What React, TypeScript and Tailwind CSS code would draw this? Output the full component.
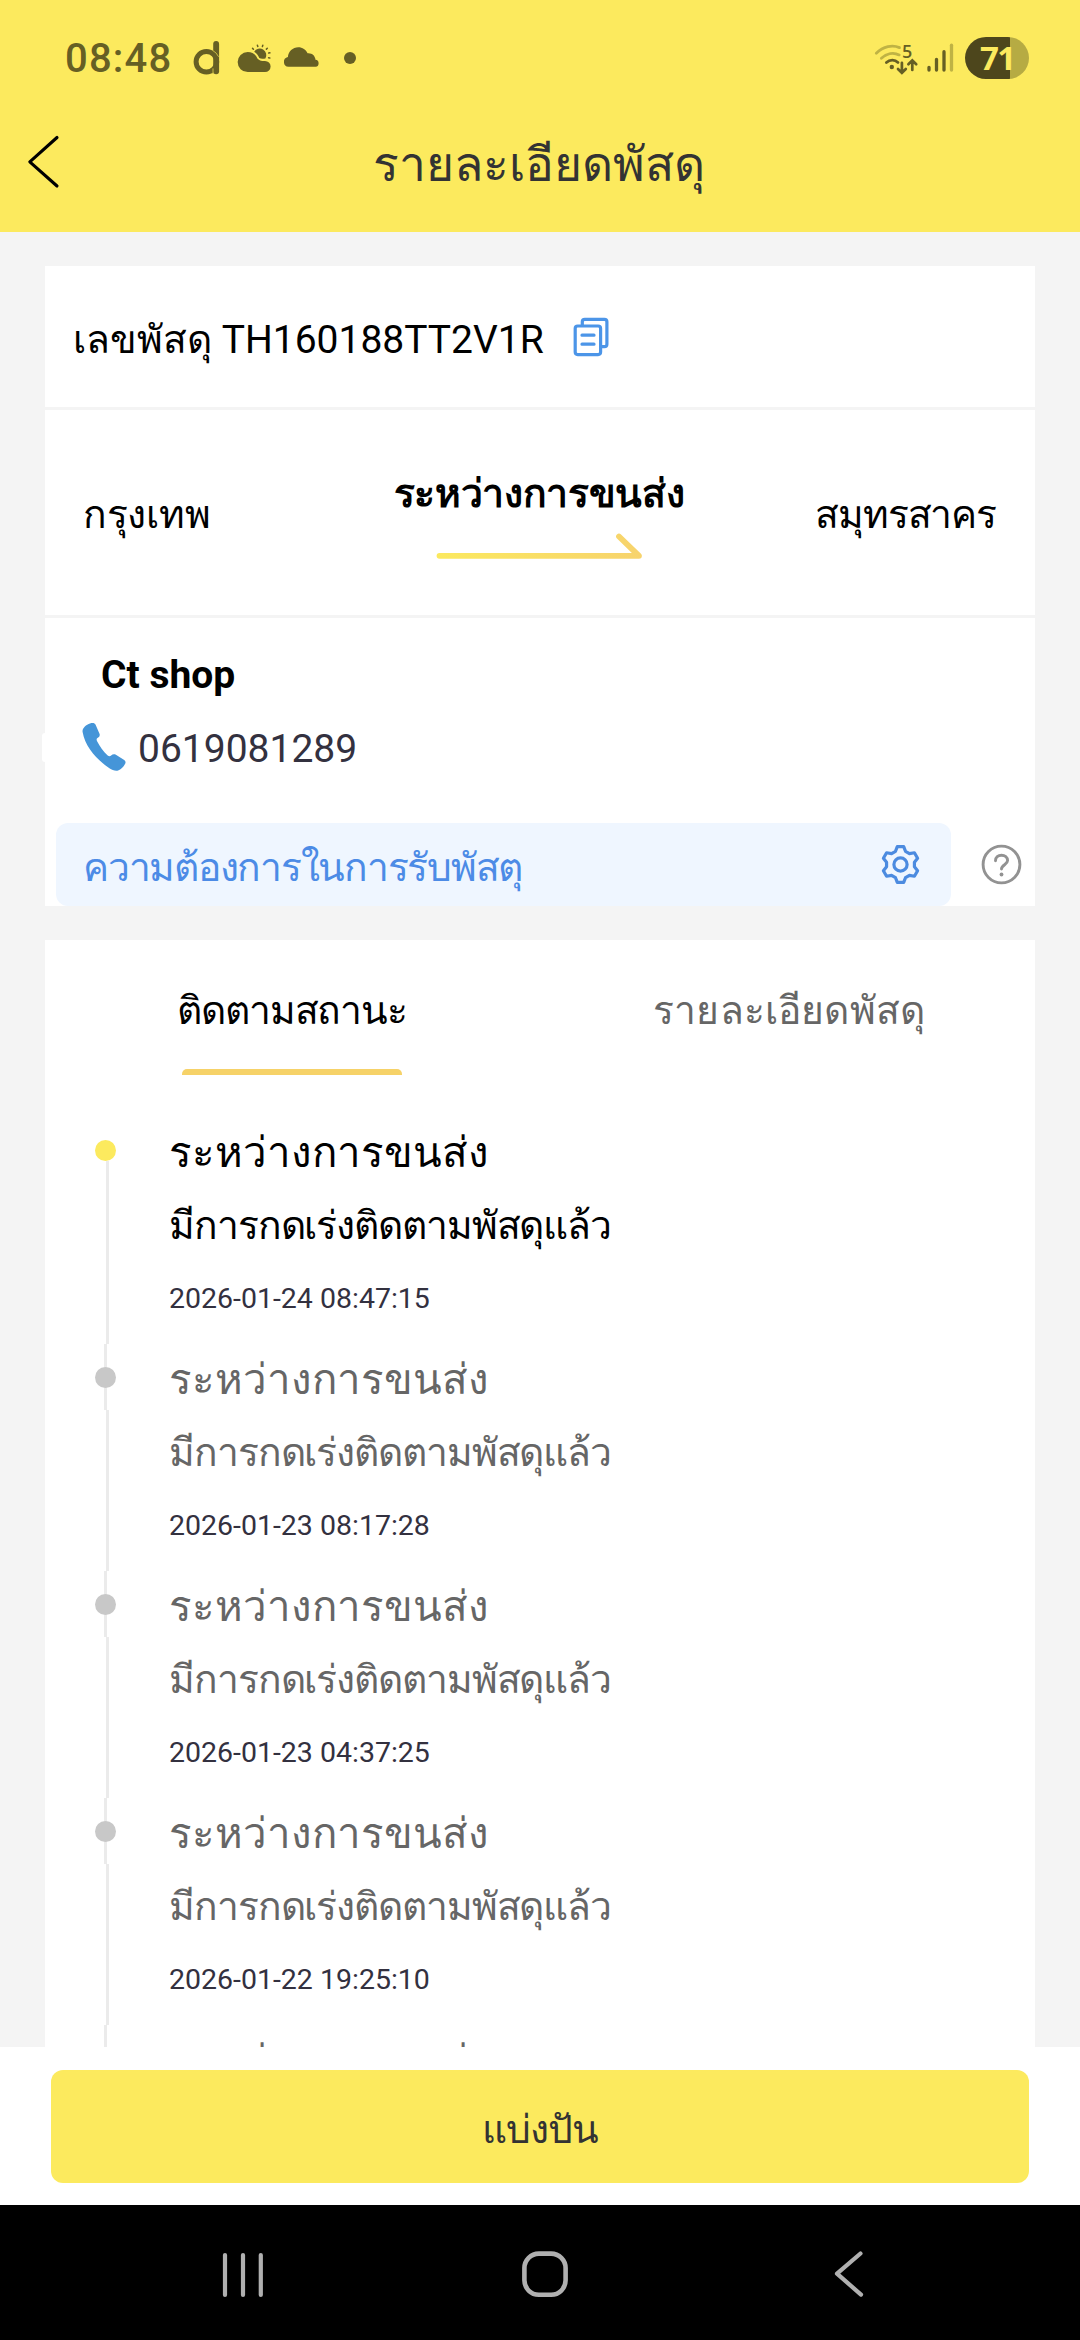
const DARK = "#665f24";
const PALE = "#bfb344";

function StatusBar() {
  return (
    <div className="flex h-[116px] items-center pl-[65px] pr-[51px]">
      <div className="mt-[2px] w-[127px] text-[40px] leading-[40px] font-medium tracking-[1.2px] text-[#665f24]">08:48</div>
      <svg className="mr-[14px]" width="30" height="40" viewBox="192 38 30 40">
        <rect x="213.2" y="41" width="5.9" height="33.2" rx="2.9" fill={DARK} />
        <circle cx="206.4" cy="61.7" r="10.3" fill="none" stroke={DARK} strokeWidth="5" />
        <path d="M212.6 50.4a13.4 13.4 0 0 1 6 6.4M213 68.4v5.6" fill="none" stroke="#c9bc46" strokeWidth="1" />
      </svg>
      <svg className="mr-[8px]" width="38" height="40" viewBox="236 38 38 40">
        <path
          d="M247.7 52c4.700 0 8.300 2.800 9.700 6.600 1.600 1.800 3 2.300 5 2.300h2.600a5.600 5.600 0 0 1 0 11.200h-17.300a10 10 0 0 1 0-20.100z"
          fill={DARK}
        />
        <path d="M254.200 51.800a6.500 6.500 0 1 1 11.200 6.600c-2 .4-4.600.5-6.100-.3-.9-2.700-2.700-4.800-5.100-6.300z" fill={DARK} />
        <g stroke={DARK} strokeWidth="1.500" strokeLinecap="round">
          <path d="M252.600 48.400l.8.800M257.400 45.200l.4 1.200M262.800 45.300l-.4 1.200M267.300 48.200l-.9.900M269.900 52.800l-1.200.3M269.800 58l-1.200-.3" />
        </g>
      </svg>
      <svg className="mr-[22px]" width="40" height="40" viewBox="282 38 40 40">
        <path
          d="M288.500 66.800a4.900 4.900 0 0 1-.6-9.700c.3-5.600 4.900-9.800 10.400-9.800 4.200 0 7.600 2.400 9.300 6 4.300-.5 7.500 2.400 7.900 6.400a3.600 3.600 0 0 1 .2 7.100z"
          fill={DARK}
        />
      </svg>
      <div className="size-[12px] rounded-full bg-[#665f24]" />
      <div className="ml-auto flex items-center">
        <div className="relative mr-[6px] h-[40px] w-[46px]">
          <svg width="46" height="40" viewBox="873 38 46 40" fill="none" strokeLinecap="round">
            <path d="M876.300 53.200c7-7 16.200-8.700 23.200-5.600" stroke={PALE} strokeWidth="2.800" />
            <path d="M881.400 58.200c5.400-5 12.300-6 17.800-3.300" stroke={PALE} strokeWidth="2.800" />
            <path d="M886.400 62.600c3.400-3.300 8.400-3.300 11.600-.2" stroke={DARK} strokeWidth="2.800" />
            <circle cx="891.800" cy="67" r="2.200" fill={DARK} />
            <path d="M901.900 62.800v9.800M898 69l3.900 3.900 3.900-3.900M912.300 70v-9.600M908.400 64.200l3.900-3.900 3.900 3.900" stroke={DARK} strokeWidth="2.700" />
          </svg>
          <span className="absolute left-[29px] top-[4px] font-['Open_Sans'] text-[18px] leading-[18px] font-semibold text-[#665f24]">5</span>
        </div>
        <svg className="mr-[10px]" width="30" height="40" viewBox="925 38 30 40" strokeWidth="3.300" strokeLinecap="round">
          <path d="M929 67.300V70M936.500 59.300V70M944 51.700V70" stroke={DARK} />
          <path d="M951.500 45.200V70" stroke={PALE} />
        </svg>
        <div className="flex h-[42px] w-[64px] items-center rounded-full bg-[linear-gradient(90deg,#4d461c_0_45px,#b6ab43_45px)]">
          <span className="pl-[15px] font-['Open_Sans'] text-[33px] leading-[42px] font-bold tracking-[-1.500px] text-[#fcea5e]">71</span>
        </div>
      </div>
    </div>
  );
}

function TitleBar() {
  return (
    <div className="flex h-[116px] items-start justify-between px-[24px]">
      <svg className="mt-[16px]" width="40" height="60" viewBox="24 132 40 60" fill="none">
        <path d="M57 137.500 29.800 161.800 57 186" stroke="#000" strokeWidth="3.100" strokeLinecap="round" strokeLinejoin="round" />
      </svg>
      <h1 className="mt-[19px] text-[48px] leading-[60px] whitespace-nowrap text-[#333]">รายละเอียดพัสดุ</h1>
      <div className="w-[42px]" />
    </div>
  );
}

function CopyIcon() {
  return (
    <svg className="-mt-[1px]" width="42" height="44" viewBox="570 314 42 44" fill="none" stroke="#4c95e8" strokeWidth="3.200" strokeLinecap="round" strokeLinejoin="round">
      <rect x="574.200" y="326" width="25.400" height="28.600" rx="2.500" />
      <path d="M581.300 325.500v-3.700a2.500 2.500 0 0 1 2.500-2.500h19.600a2.500 2.500 0 0 1 2.500 2.500v22.400a2.500 2.500 0 0 1-2.500 2.500h-3.300M581 335.200h12M581 344.200h12" />
    </svg>
  );
}

const GEAR = Array.from({ length: 6 }, (_, k) => {
  const a = (k * Math.PI) / 3;
  return [
    [-5, -13.2],
    [-3.2, -17.9],
    [3.2, -17.9],
    [5, -13.2],
  ]
    .map(([x, y]) => `${(x * Math.cos(a) - y * Math.sin(a)).toFixed(2)},${(x * Math.sin(a) + y * Math.cos(a)).toFixed(2)}`)
    .join(" ");
}).join(" ");

function ParcelCard() {
  return (
    <section className="bg-white text-black">
      <div className="flex h-[141px] items-start border-b-[3px] border-[#f4f4f4] box-content pl-[28px]">
        <p className="mt-[49px] w-[498px] text-[39px] leading-[50px] whitespace-nowrap">เลขพัสดุ TH160188TT2V1R</p>
        <div className="mt-[49px]">
          <CopyIcon />
        </div>
      </div>
      <div className="flex h-[205px] box-content items-start justify-between border-b-[3px] border-[#f4f4f4] pl-[38px] pr-[40px]">
        <p className="mt-[80px] w-[180px] text-[39px] leading-[50px] tracking-[-0.300px] whitespace-nowrap">กรุงเทพ</p>
        <div className="mt-[59px] flex flex-col items-center">
          <p className="text-[39px] leading-[50px] font-bold tracking-[-0.350px] whitespace-nowrap">ระหว่างการขนส่ง</p>
          <svg className="ml-[2px] mt-[12px]" width="210" height="32" viewBox="436 531 210 32" fill="none">
            <defs>
              <linearGradient id="route" gradientUnits="userSpaceOnUse" x1="438" y1="0" x2="643" y2="0">
                <stop offset="0" stopColor="#fbe95f" />
                <stop offset="1" stopColor="#f7d36d" />
              </linearGradient>
            </defs>
            <path d="M440.500 555.800H640L620 536.500" stroke="url(#route)" strokeWidth="5.800" strokeLinecap="round" strokeLinejoin="round" />
          </svg>
        </div>
        <p className="mt-[80px] w-[180px] text-right text-[39px] leading-[50px] tracking-[-1.100px] whitespace-nowrap">สมุทรสาคร</p>
      </div>
      <div className="relative flex h-[288px] flex-col">
        <span className="absolute -left-[3px] top-[115px] h-[29px] w-[6px] rounded-full bg-white" />
        <p className="mt-[32px] pl-[56px] text-[39px] leading-[50px] font-bold">Ct shop</p>
        <div className="mt-[23px] flex items-center pl-[35px]">
          <svg className="-mt-[3px]" width="48" height="54" viewBox="80 720 48 54">
            <path
              d="M82.600 732c-.6-3.600 3.400-7.600 7.400-8.600 3-.8 4.700-.4 5.600 1.400l4 9.200c.5 1.600-.4 3-1.800 3.700-1.400.8-1.500 2-.7 3.500 2.700 5.300 6 10 10.600 14.300 1.200 1.100 2.400 1 3.400 0 1.300-1.300 3-1.700 4.800-.8l8.300 5.200c1.500 1 1.700 2.400.8 4.200-1.600 3.200-4.100 5.600-6.900 6.500-2.800.7-6-.4-8.700-2.300-13.600-9.400-24.300-22-26.800-36.300z"
              fill="#4595d8"
            />
          </svg>
          <p className="ml-[10px] text-[39px] leading-[50px] text-[#33313f]">0619081289</p>
        </div>
        <div className="mt-[49px] flex items-start pl-[11px]">
          <div className="flex h-[83px] w-[895px] items-start justify-between rounded-[12px] bg-[#eff6ff] pl-[27px] pr-[29px]">
            <p className="mt-[20px] text-[39px] leading-[50px] tracking-[-1.250px] whitespace-nowrap text-[#4c8be6]">ความต้องการในการรับพัสตุ</p>
            <svg className="mt-[20px]" width="43" height="43" viewBox="-21.500 -21.500 43 43" fill="none" stroke="#4c8be0" strokeWidth="3.200" strokeLinejoin="round">
              <polygon points={GEAR} />
              <circle r="6.600" />
            </svg>
          </div>
          <svg className="ml-[29px] mt-[20px]" width="43" height="43" viewBox="-21.500 -21.500 43 43" fill="none" stroke="#929292" strokeWidth="2.900" strokeLinecap="round">
            <circle r="18.400" />
            <path d="M-6-3.800C-6-7.300-3.300-9.300 0-9.300S6.100-7.200 6.100-3.900C6.100.1 0 .4 0 4.600" />
            <circle cy="10" r="1.900" fill="#929292" stroke="none" />
          </svg>
        </div>
      </div>
    </section>
  );
}

const events = ["2026-01-24 08:47:15", "2026-01-23 08:17:28", "2026-01-23 04:37:25", "2026-01-22 19:25:10", ""];

function TimelineItem({ date, current }: { date: string; current: boolean }) {
  return (
    <li className={`flex h-[227px] shrink-0 ${current ? "text-black" : "text-[#666]"}`}>
      <div className="relative w-[124px]">
        {!current && <span className="absolute left-[59px] top-0 h-[66px] w-[3px] bg-[#ebebeb]" />}
        <span className={`absolute bottom-0 left-[61px] w-[3px] bg-[#ebebeb] ${current ? "top-[44px]" : "top-[66px]"}`} />
        <span className={`absolute left-[50px] top-[23px] size-[21px] rounded-full ${current ? "bg-[#fcea5e]" : "bg-[#c8c8c8]"}`} />
      </div>
      <div className="whitespace-nowrap">
        <p className="mt-[8px] text-[42px] leading-[56px]">ระหว่างการขนส่ง</p>
        {date && (
          <>
            <p className="mt-[20px] text-[39px] leading-[50px] tracking-[-1.100px]">มีการกดเร่งติดตามพัสดุแล้ว</p>
            <p className="mt-[30px] text-[28.500px] leading-[36px] text-[#33313f]">{date}</p>
          </>
        )}
      </div>
    </li>
  );
}

function TrackingCard() {
  return (
    <section className="mt-[34px] bg-white">
      <div className="flex h-[177px] items-start pl-[133px] pr-[110px] justify-between text-[39px] leading-[50px] whitespace-nowrap">
        <div className="mt-[46px] flex w-[228px] flex-col items-center text-black">
          <p className="tracking-[-1.100px]">ติดตามสถานะ</p>
          <span className="mt-[33px] h-[6px] w-[220px] rounded-t-[5px] bg-[#f6d268]" />
        </div>
        <p className="mt-[46px] tracking-[0.150px] text-[#666]">รายละเอียดพัสดุ</p>
      </div>
      <ul className="flex flex-col">
        {events.map((d, i) => (
          <TimelineItem key={i} date={d} current={i === 0} />
        ))}
      </ul>
    </section>
  );
}

function NavBar() {
  return (
    <nav className="flex h-[135px] shrink-0 items-center bg-black">
      <svg className="ml-[220px]" width="46" height="50" viewBox="220 2248 46 50" stroke="#b0b0b0" strokeWidth="4.200" strokeLinecap="round">
        <path d="M225 2255v40M243 2255v40M260.800 2255v40" />
      </svg>
      <svg className="ml-[254px]" width="50" height="50" viewBox="520 2248 50 50" fill="none" stroke="#b0b0b0" strokeWidth="4.600">
        <rect x="524.400" y="2253.600" width="41.200" height="41.200" rx="14.500" />
      </svg>
      <svg className="ml-[261px]" width="36" height="50" viewBox="830 2248 36 50" fill="none" stroke="#b0b0b0" strokeWidth="4.200" strokeLinecap="round" strokeLinejoin="round">
        <path d="M859.500 2253.500 836 2273.700 860 2294.600" />
      </svg>
    </nav>
  );
}

export default function App() {
  return (
    <div className="flex h-[2340px] w-[1080px] flex-col overflow-hidden bg-[#f4f4f4] font-[Roboto,sans-serif]">
      <header className="shrink-0 bg-[#fcea5e]">
        <StatusBar />
        <TitleBar />
      </header>
      <main className="h-[1815px] overflow-hidden px-[45px] pt-[34px]">
        <ParcelCard />
        <TrackingCard />
      </main>
      <div className="flex h-[158px] shrink-0 flex-col bg-white px-[51px] pt-[23px]">
        <button className="flex h-[113px] items-start justify-center rounded-[12px] bg-[#fcea5e] text-[#333]">
          <span className="mt-[35px] text-[39px] leading-[50px] tracking-[-1px]">แบ่งปัน</span>
        </button>
      </div>
      <NavBar />
    </div>
  );
}
